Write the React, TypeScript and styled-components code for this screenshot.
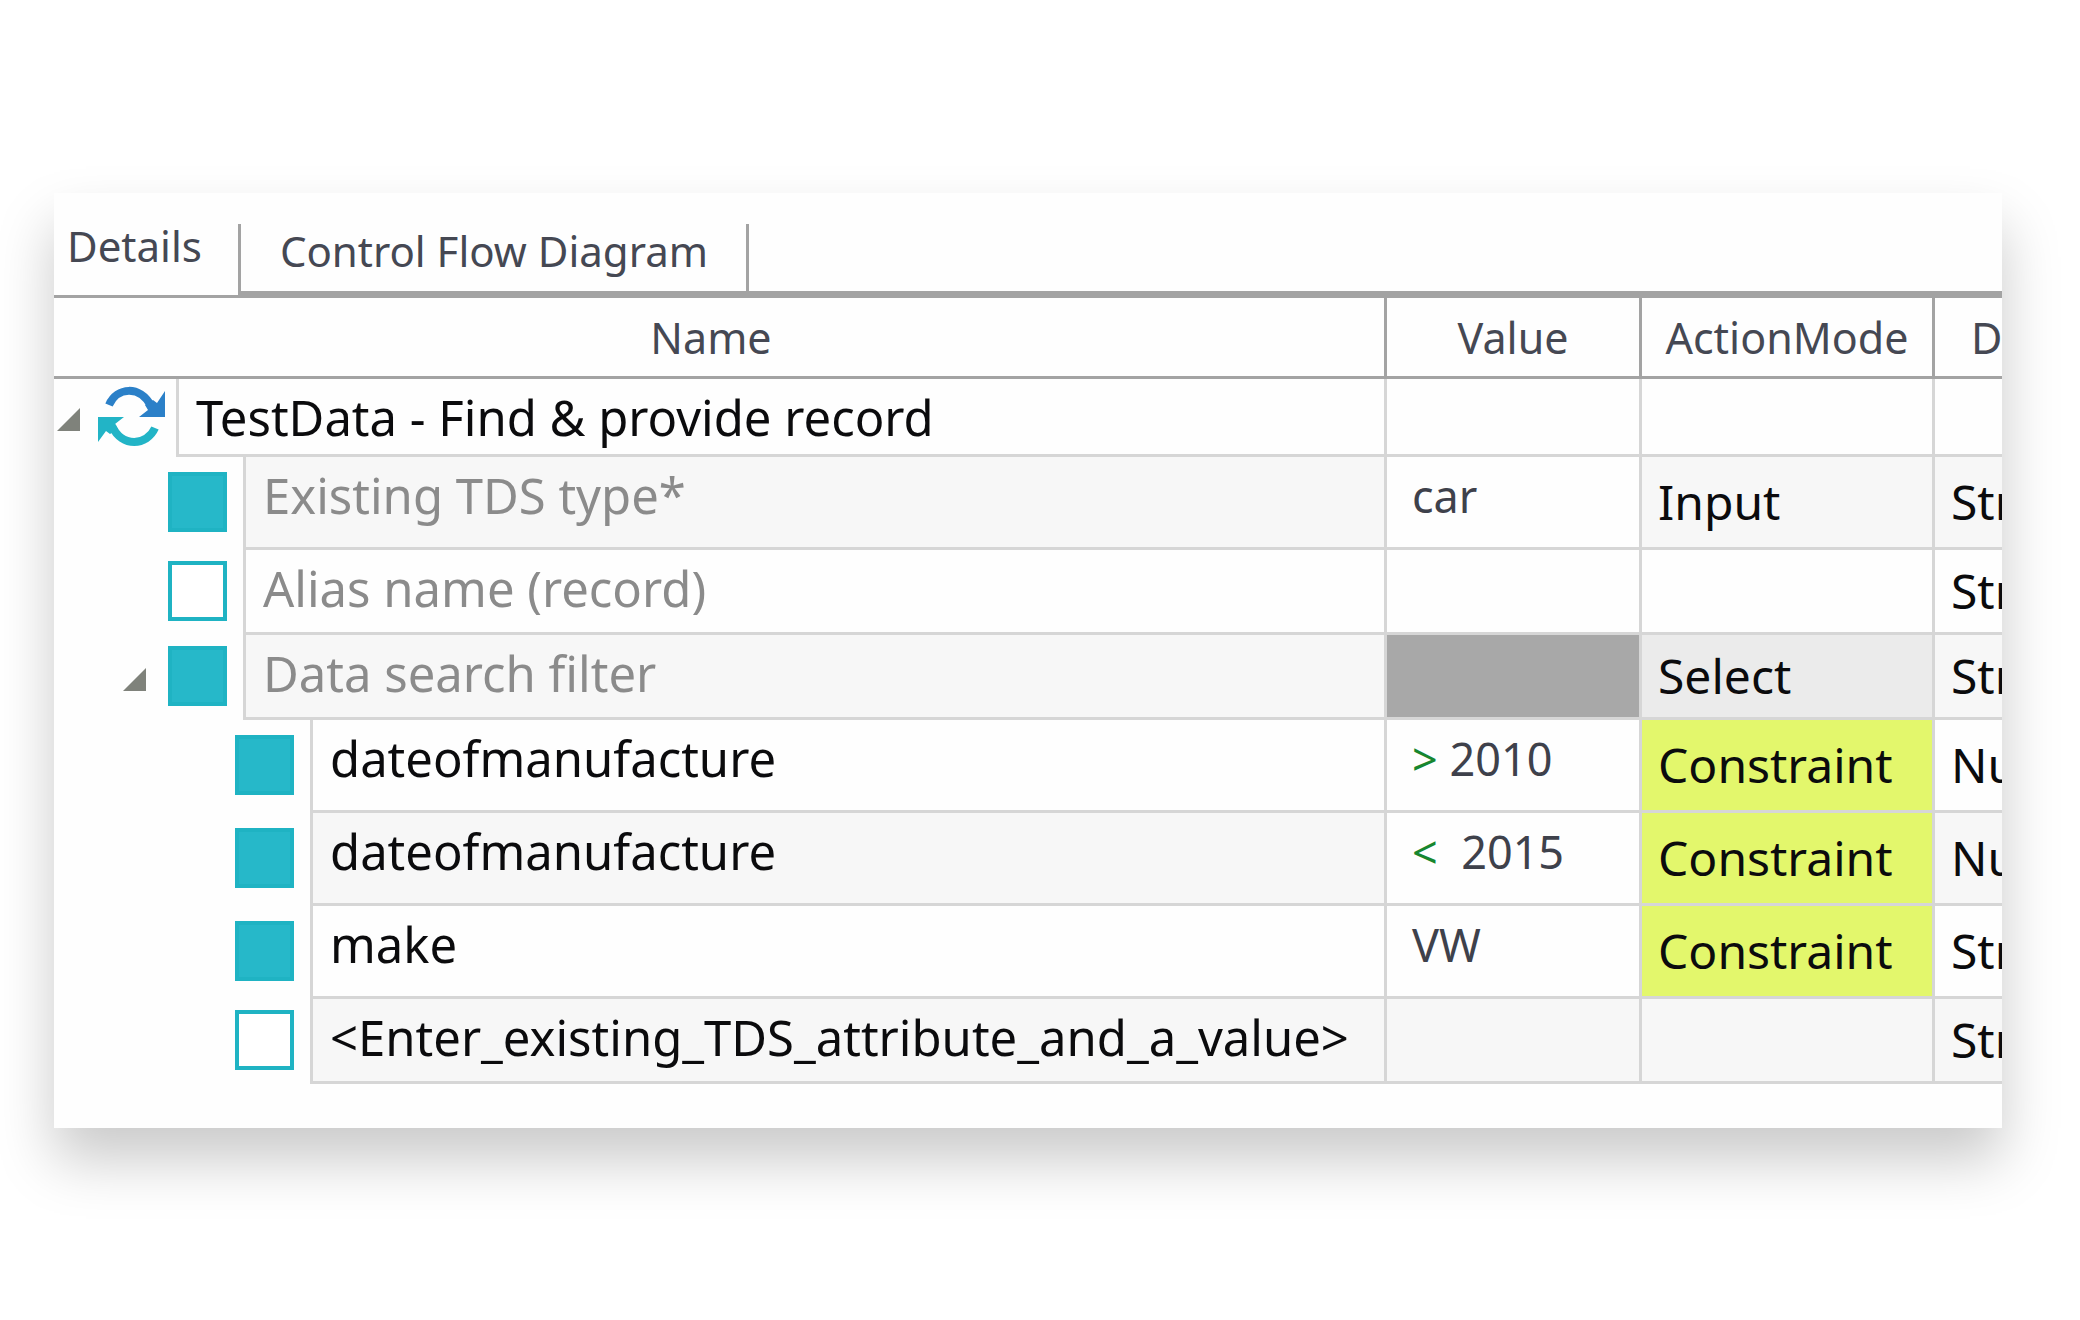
import React from "react";
import styled, { createGlobalStyle, css } from "styled-components";

const line = "#d6d6d6";
const headLine = "#a3a3a3";
const teal = "#26b8c9";

const GlobalStyle = createGlobalStyle`
  * { box-sizing: border-box; }
  body { margin: 0; background: #fff; }
`;

const Page = styled.main`
  padding: 193px 78px 120px 54px;
  font-family: "Noto Sans", "Open Sans", sans-serif;
  font-size: 48px;
  line-height: 60px;
  color: #0b0b0d;
`;

const Panel = styled.section`
  padding: 31px 0 44px;
  overflow: hidden;
  background: #fefefe;
  box-shadow: 0 32px 54px rgba(0, 0, 0, 0.21);
`;

const TabStrip = styled.div`
  display: flex;
  height: 74px;
  border-bottom: 3px solid ${headLine};
`;

const Tab = styled.button<{ $active?: boolean }>`
  padding: ${(p) => (p.$active ? "0 36px 28px 13px" : "0 38px 14px 39px")};
  border: 0 solid ${headLine};
  background: none;
  font: inherit;
  font-size: 42px;
  line-height: 40px;
  white-space: nowrap;
  color: #454853;
  ${(p) =>
    !p.$active &&
    css`
      border-width: 0 3px 4px;
    `}
`;

const StripRest = styled.div`
  flex: 1;
  border-bottom: 4px solid ${headLine};
`;

const Table = styled.table`
  width: 100%;
  table-layout: fixed;
  border-collapse: separate;
  border-spacing: 0;
`;

const Col = styled.col<{ $width?: number }>`
  width: ${(p) => (p.$width ? `${p.$width}px` : "auto")};
`;

const Head = styled.th<{ $align?: "left" }>`
  height: 81px;
  padding: ${(p) => (p.$align ? "2px 0 0 36px" : "2px 0 0")};
  overflow: hidden;
  border-right: 3px solid ${headLine};
  border-bottom: 3px solid ${headLine};
  font-size: 43px;
  font-weight: 400;
  text-align: ${(p) => p.$align ?? "center"};
  color: #454853;
  &:first-child { padding-right: 16px; }
  &:last-child { border-right: 0; }
`;

const NameCell = styled.td`
  padding: 0;
`;

const Branch = styled.div<{ $height: number; $level: number }>`
  display: grid;
  grid-template-columns: ${(p) => 122 + p.$level * 67}px 1fr;
  height: ${(p) => p.$height}px;
`;

const Gutter = styled.div<{ $root: boolean }>`
  display: flex;
  align-items: center;
  justify-content: flex-end;
  gap: ${(p) => (p.$root ? 18 : 22)}px;
  padding: 0 ${(p) => (p.$root ? 11 : 16)}px 3px 0;
`;

const Toggle = styled.button`
  display: flex;
  padding: 6px 0 0;
  border: 0;
  background: none;
`;

const Check = styled.input`
  appearance: none;
  width: 59px;
  height: 60px;
  margin: 0;
  border: 4px solid #1fb3c3;
  background: #fff;
  &:checked { background: ${teal}; }
`;

const Name = styled.label<{ $muted?: boolean; $shaded?: boolean }>`
  padding: 8px 0 0 17px;
  border: 0 solid ${line};
  border-width: 0 3px 3px;
  background: ${(p) => (p.$shaded ? "#f7f7f7" : "#fefefe")};
  font-size: 49px;
  color: ${(p) => (p.$muted ? "#8b8b8b" : "inherit")};
  white-space: nowrap;
`;

const Cell = styled.td<{ $fill?: string }>`
  padding: 0 0 0 16px;
  overflow: hidden;
  border-right: 3px solid ${line};
  border-bottom: 3px solid ${line};
  background: ${(p) => p.$fill ?? "transparent"};
  white-space: nowrap;
  &:last-child { border-right: 0; }
`;

const ValueCell = styled(Cell)`
  padding: 9px 0 0 25px;
  vertical-align: top;
  font-size: 45px;
  color: #3e414b;
  white-space: pre;
`;

const Operator = styled.span`
  color: #17862f;
`;

const Triangle = () => (
  <svg width="23" height="23" viewBox="0 0 23 23" aria-hidden="true">
    <path d="M23 0V23H0Z" fill="#7f827b" />
  </svg>
);

const CycleIcon = () => (
  <svg width="67" height="61" viewBox="0 0 67 61" aria-hidden="true">
    <path d="M11 19C19 1 42 -1 53 20" fill="none" stroke="#2b80c8" strokeWidth="8" />
    <path d="M67 5V31H41L50 24L47 19L55 14L59 17Z" fill="#2b80c8" />
    <path d="M14 40C24 62 49 60 57 42" fill="none" stroke="#22b4c6" strokeWidth="8" />
    <path d="M0 56V31H26L17 38L20 43L12 48L8 45Z" fill="#22b4c6" />
  </svg>
);

type Item = {
  id: string;
  name: string;
  level: number;
  height: number;
  checked?: boolean;
  open?: boolean;
  muted?: boolean;
  operator?: string;
  value?: string;
  valueFill?: string;
  mode?: string;
  modeFill?: string;
  type?: string;
};

const constraint = { mode: "Constraint", modeFill: "#e3f76c" };

const items: Item[] = [
  { id: "root", name: "TestData - Find & provide record", level: 0, height: 78, open: true },
  { id: "type", name: "Existing TDS type*", level: 1, height: 93, checked: true, muted: true, value: "car", mode: "Input", type: "Str" },
  { id: "alias", name: "Alias name (record)", level: 1, height: 85, checked: false, muted: true, type: "Str" },
  { id: "filter", name: "Data search filter", level: 1, height: 85, checked: true, open: true, muted: true, valueFill: "#a8a8a8", mode: "Select", modeFill: "#ebebeb", type: "Str" },
  { id: "from", name: "dateofmanufacture", level: 2, height: 93, checked: true, operator: ">", value: " 2010", ...constraint, type: "Nu" },
  { id: "to", name: "dateofmanufacture", level: 2, height: 93, checked: true, operator: "<", value: "  2015", ...constraint, type: "Nu" },
  { id: "make", name: "make", level: 2, height: 93, checked: true, value: "VW", ...constraint, type: "Str" },
  { id: "new", name: "<Enter_existing_TDS_attribute_and_a_value>", level: 2, height: 85, checked: false, valueFill: "#f7f7f7", type: "Str" },
];

function Row({ item, shaded }: { item: Item; shaded: boolean }) {
  const stripe = shaded ? "#f7f7f7" : undefined;
  const root = item.level === 0;
  return (
    <tr>
      <NameCell>
        <Branch $height={item.height} $level={item.level}>
          <Gutter $root={root}>
            {item.open && (
              <Toggle aria-label="Collapse" aria-expanded="true">
                <Triangle />
              </Toggle>
            )}
            {root ? <CycleIcon /> : <Check type="checkbox" id={item.id} defaultChecked={item.checked} />}
          </Gutter>
          <Name as={root ? "div" : "label"} htmlFor={root ? undefined : item.id} $muted={item.muted} $shaded={shaded}>
            {item.name}
          </Name>
        </Branch>
      </NameCell>
      <ValueCell $fill={item.valueFill}>
        {item.operator && <Operator>{item.operator}</Operator>}
        {item.value}
      </ValueCell>
      <Cell $fill={item.modeFill ?? stripe}>{item.mode}</Cell>
      <Cell $fill={stripe}>{item.type}</Cell>
    </tr>
  );
}

export default function App() {
  return (
    <Page>
      <GlobalStyle />
      <Panel>
        <TabStrip role="tablist">
          <Tab role="tab" aria-selected="true" $active>Details</Tab>
          <Tab role="tab" aria-selected="false">Control Flow Diagram</Tab>
          <StripRest />
        </TabStrip>
        <Table>
          <colgroup>
            <Col />
            <Col $width={255} />
            <Col $width={293} />
            <Col $width={67} />
          </colgroup>
          <thead>
            <tr>
              <Head>Name</Head>
              <Head>Value</Head>
              <Head>ActionMode</Head>
              <Head $align="left">D</Head>
            </tr>
          </thead>
          <tbody>
            {items.map((item, i) => (
              <Row key={item.id} item={item} shaded={i % 2 === 1} />
            ))}
          </tbody>
        </Table>
      </Panel>
    </Page>
  );
}
